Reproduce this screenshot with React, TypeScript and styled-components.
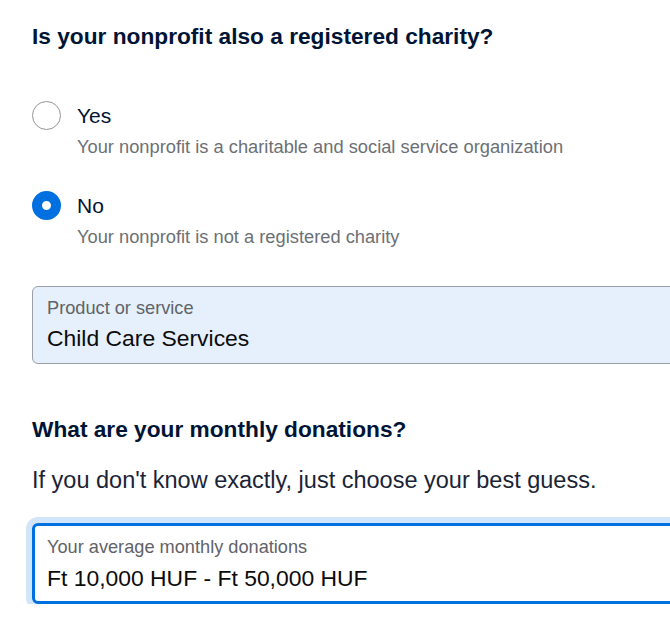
import styled, { createGlobalStyle } from "styled-components";

const GlobalStyle = createGlobalStyle`
  html, body {
    margin: 0;
    padding: 0;
    background: #fff;
    overflow: hidden;
  }
  body {
    font-family: "Liberation Sans", Arial, sans-serif;
    color: #001435;
  }
`;

const Page = styled.div`
  width: 700px;
  padding: 22px 0 0 32px;
  box-sizing: border-box;
`;

const Heading = styled.h2`
  margin: 0;
  font-size: 22.7px;
  font-weight: 700;
  line-height: 28px;
`;

const RadioGroup = styled.div`
  display: flex;
  flex-direction: column;
  gap: 32px;
  margin-top: 51px;
`;

const Option = styled.label`
  display: grid;
  grid-template-columns: 29px 1fr;
  column-gap: 16px;
  row-gap: 5px;
  align-items: center;
`;

const Circle = styled.span<{ $checked?: boolean }>`
  width: 29px;
  height: 29px;
  border-radius: 50%;
  box-sizing: border-box;
  border: ${(p) => (p.$checked ? "10px solid #0070e0" : "1.5px solid #959595")};
  background: #fff;
`;

const OptionTitle = styled.span`
  font-size: 21px;
  line-height: 28px;
`;

const OptionDesc = styled.span`
  grid-column: 2;
  font-size: 18.3px;
  line-height: 24px;
  color: #6c7075;
`;

const Field = styled.div<{ $focused?: boolean }>`
  box-sizing: border-box;
  border-radius: 6px;
  display: flex;
  flex-direction: column;
  ${(p) =>
    p.$focused
      ? `
    background: #fff;
    border: 3.5px solid #0070e0;
    box-shadow: 0 0 0 6px #d1e6fa;
    height: 81px;
    padding: 9.5px 12px 0;
    gap: 5px;
    margin-top: 28px;
  `
      : `
    background: #e5f0fc;
    border: 1px solid #9aa0a6;
    height: 78px;
    padding: 10px 14px 0;
    gap: 4px;
    margin-top: 37px;
  `}
`;

const FieldLabel = styled.span`
  font-size: 18.2px;
  line-height: 22px;
  color: #5f6368;
`;

const FieldValue = styled.span`
  font-size: 22.9px;
  line-height: 30px;
  color: #0b0b0b;
`;

const Section = styled.section`
  margin-top: 51px;
`;

const Hint = styled.p`
  margin: 22px 0 0;
  font-size: 23.5px;
  line-height: 30px;
  color: #1a2436;
`;

export default function App() {
  return (
    <>
      <GlobalStyle />
      <Page>
        <Heading>Is your nonprofit also a registered charity?</Heading>
        <RadioGroup>
          <Option>
            <Circle />
            <OptionTitle>Yes</OptionTitle>
            <OptionDesc>Your nonprofit is a charitable and social service organization</OptionDesc>
          </Option>
          <Option>
            <Circle $checked />
            <OptionTitle>No</OptionTitle>
            <OptionDesc>Your nonprofit is not a registered charity</OptionDesc>
          </Option>
        </RadioGroup>
        <Field>
          <FieldLabel>Product or service</FieldLabel>
          <FieldValue>Child Care Services</FieldValue>
        </Field>
        <Section>
          <Heading>What are your monthly donations?</Heading>
          <Hint>If you don't know exactly, just choose your best guess.</Hint>
          <Field $focused>
            <FieldLabel>Your average monthly donations</FieldLabel>
            <FieldValue>Ft 10,000 HUF - Ft 50,000 HUF</FieldValue>
          </Field>
        </Section>
      </Page>
    </>
  );
}
